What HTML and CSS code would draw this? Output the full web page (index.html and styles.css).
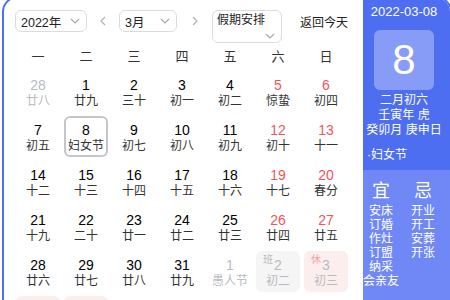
FILE: index.html
```html
<!DOCTYPE html>
<html lang="zh-CN">
<head>
    <meta charset="UTF-8">
    <meta name="viewport" content="width=device-width, initial-scale=1.0">
    <title>万年历</title>
    <link rel="stylesheet" href="styles.css">
</head>
<body>

<div class="calendar">
  <div class="main">
    <div class="toolbar">
      <div class="select year">2022年
        <svg class="caret" width="10" height="6" viewBox="0 0 10 6"><path d="M1 1l4 4 4-4" fill="none" stroke="#a6a9b0" stroke-width="1.2"/></svg>
      </div>
      <span class="nav prev">
        <svg width="6" height="10" viewBox="0 0 6 10"><path d="M5 1L1 5l4 4" fill="none" stroke="#b0b3ba" stroke-width="1.2"/></svg>
      </span>
      <div class="select month">3月
        <svg class="caret" width="10" height="6" viewBox="0 0 10 6"><path d="M1 1l4 4 4-4" fill="none" stroke="#a6a9b0" stroke-width="1.2"/></svg>
      </div>
      <span class="nav next">
        <svg width="6" height="10" viewBox="0 0 6 10"><path d="M1 1l4 4-4 4" fill="none" stroke="#b0b3ba" stroke-width="1.2"/></svg>
      </span>
      <div class="select holiday">假期安排
        <svg class="caret" width="10" height="6" viewBox="0 0 10 6"><path d="M1 1l4 4 4-4" fill="none" stroke="#a6a9b0" stroke-width="1.2"/></svg>
      </div>
      <button class="today">返回今天</button>
    </div>

    <div class="weekdays">
      <span>一</span><span>二</span><span>三</span><span>四</span><span>五</span><span>六</span><span>日</span>
    </div>

    <div class="days">
      <div class="day other"><b>28</b><i>廿八</i></div>
      <div class="day"><b>1</b><i>廿九</i></div>
      <div class="day"><b>2</b><i>三十</i></div>
      <div class="day"><b>3</b><i>初一</i></div>
      <div class="day"><b>4</b><i>初二</i></div>
      <div class="day weekend"><b>5</b><i>惊蛰</i></div>
      <div class="day weekend"><b>6</b><i>初四</i></div>

      <div class="day"><b>7</b><i>初五</i></div>
      <div class="day selected"><b>8</b><i>妇女节</i></div>
      <div class="day"><b>9</b><i>初七</i></div>
      <div class="day"><b>10</b><i>初八</i></div>
      <div class="day"><b>11</b><i>初九</i></div>
      <div class="day weekend"><b>12</b><i>初十</i></div>
      <div class="day weekend"><b>13</b><i>十一</i></div>

      <div class="day"><b>14</b><i>十二</i></div>
      <div class="day"><b>15</b><i>十三</i></div>
      <div class="day"><b>16</b><i>十四</i></div>
      <div class="day"><b>17</b><i>十五</i></div>
      <div class="day"><b>18</b><i>十六</i></div>
      <div class="day weekend"><b>19</b><i>十七</i></div>
      <div class="day weekend"><b>20</b><i>春分</i></div>

      <div class="day"><b>21</b><i>十九</i></div>
      <div class="day"><b>22</b><i>二十</i></div>
      <div class="day"><b>23</b><i>廿一</i></div>
      <div class="day"><b>24</b><i>廿二</i></div>
      <div class="day"><b>25</b><i>廿三</i></div>
      <div class="day weekend"><b>26</b><i>廿四</i></div>
      <div class="day weekend"><b>27</b><i>廿五</i></div>

      <div class="day"><b>28</b><i>廿六</i></div>
      <div class="day"><b>29</b><i>廿七</i></div>
      <div class="day"><b>30</b><i>廿八</i></div>
      <div class="day"><b>31</b><i>廿九</i></div>
      <div class="day other"><b>1</b><i>愚人节</i></div>
      <div class="day other work"><span class="tag">班</span><b>2</b><i>初二</i></div>
      <div class="day other rest"><span class="tag">休</span><b>3</b><i>初三</i></div>

      <!-- next week only peeks in at the bottom edge -->
      <div class="day other rest"></div>
      <div class="day other rest"></div>
    </div>
  </div>

  <div class="side">
    <div class="side-top">
      <div class="side-date">2022-03-08</div>
      <div class="side-big">8</div>
      <div class="side-lunar">
        二月初六<br>
        壬寅年 虎<br>
        癸卯月 庚申日
      </div>
      <div class="side-fest">·妇女节</div>
    </div>
    <div class="side-bottom">
      <div class="almanac">
        <div class="col">
          <div class="head">宜</div>
          <div>安床</div>
          <div>订婚</div>
          <div>作灶</div>
          <div>订盟</div>
          <div>纳采</div>
          <div>会亲友</div>
        </div>
        <div class="col">
          <div class="head">忌</div>
          <div>开业</div>
          <div>开工</div>
          <div>安葬</div>
          <div>开张</div>
        </div>
      </div>
    </div>
  </div>
</div>

</body>
</html>
```

FILE: styles.css
```css
html, body {
    margin: 0;
    padding: 0;
    overflow: hidden;
    background-color: #fff;
}

body {
    font-family: "Liberation Sans", "Noto Sans CJK SC", sans-serif;
    color: #222;
    width: 450px;
    height: 300px;
}

.calendar {
    display: flex;
    width: 450px;
    height: 330px;
    margin: -4px 0 0 2px;
    border: 2px solid #4e6ef2;
    border-radius: 16px;
    overflow: hidden;
    box-sizing: border-box;
}

.main {
    width: 359px;
    flex: none;
    padding: 12px 0 0 12px;
    box-sizing: border-box;
}

/* top bar */
.toolbar {
    display: flex;
    align-items: flex-start;
    height: 33px;
    margin-left: -1px;
}

.select {
    display: flex;
    align-items: center;
    justify-content: space-between;
    height: 22px;
    padding: 0 6px 0 5px;
    border: 1px solid #d9dbe1;
    border-radius: 6px;
    font-size: 12.5px;
    color: #222;
    box-sizing: border-box;
}

.year {
    width: 72px;
}

.month {
    width: 58px;
}

.holiday {
    display: block;
    width: 70px;
    height: 33px;
    padding: 2px 6px 0 4px;
    line-height: 15px;
    font-size: 12px;
}

.holiday .caret {
    display: block;
    margin: 5px 0 0 auto;
}

.nav {
    display: flex;
    align-items: center;
    justify-content: center;
    width: 32px;
    height: 22px;
}

.nav.next {
    width: 35px;
}

.today {
    margin-left: 14px;
    height: 22px;
    padding: 0 4px;
    border: none;
    background: none;
    font-family: inherit;
    font-size: 12px;
    color: #222;
}

/* weekday header and grid */
.weekdays,
.days {
    display: grid;
    grid-template-columns: repeat(7, 44px);
    column-gap: 4px;
}

.weekdays {
    margin-top: 2px;
    line-height: 24px;
    font-size: 13px;
    text-align: center;
    color: #333;
}

.days {
    margin-top: 2px;
    grid-auto-rows: 41px;
    row-gap: 4px;
}

.day {
    position: relative;
    padding-top: 5px;
    border-radius: 6px;
    text-align: center;
    box-sizing: border-box;
}

.day b {
    display: block;
    font-weight: normal;
    font-size: 14px;
    line-height: 18px;
    color: #000;
}

.day i {
    display: block;
    font-style: normal;
    font-size: 12px;
    line-height: 14px;
    color: #333;
}

.day.weekend b {
    color: #f2545b;
}

.day.other b,
.day.other i {
    color: #b8bbc2;
}

.day.selected {
    padding-top: 3px;
    border: 2px solid #c4c6cc;
}

.day.work {
    background-color: #f5f5f6;
}

.day.rest {
    background-color: #fdeeee;
}

.tag {
    position: absolute;
    top: 3px;
    left: 7px;
    font-size: 10px;
    line-height: 12px;
    color: #bbbbbb;
}

.rest .tag {
    color: #f5a3a6;
}

/* right panel */
.side {
    flex: 1;
    color: #fff;
}

.side-top {
    height: 172px;
    padding: 6px 5px 0 0;
    background-color: #4e6ef2;
    box-sizing: border-box;
    text-align: center;
}

.side-date {
    font-size: 13px;
    line-height: 16px;
}

.side-big {
    width: 60px;
    height: 60px;
    margin: 10px auto 0;
    border-radius: 6px;
    background-color: rgba(255, 255, 255, 0.32);
    font-size: 42px;
    line-height: 60px;
}

.side-lunar {
    margin-top: 3px;
    font-size: 12px;
    line-height: 15px;
    white-space: nowrap;
}

.side-fest {
    margin-top: 10px;
    padding-left: 4px;
    text-align: left;
    font-size: 12px;
    line-height: 14px;
}

.side-bottom {
    height: 160px;
    background-color: #6f88f5;
    padding-top: 10px;
    box-sizing: border-box;
}

.almanac {
    display: flex;
    gap: 6px;
    font-size: 12px;
    line-height: 14px;
    text-align: center;
}

.almanac .col {
    width: 36px;
    white-space: nowrap;
}

.almanac .head {
    font-size: 18px;
    line-height: 22px;
    margin-bottom: 2px;
}
```
